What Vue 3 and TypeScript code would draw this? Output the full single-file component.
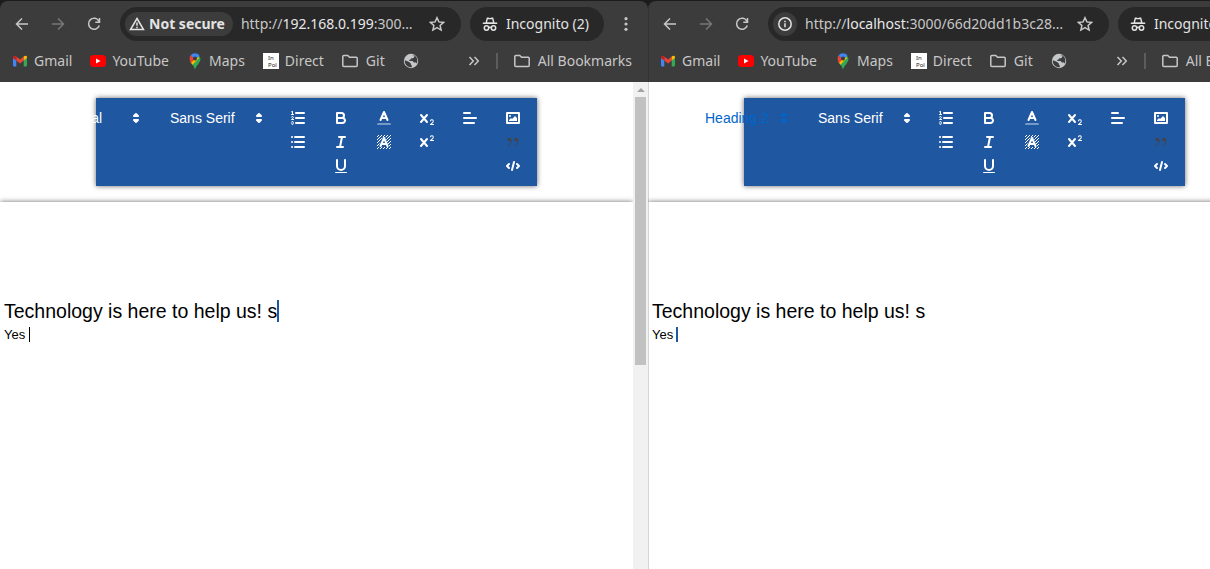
<script setup lang="ts">
interface BrowserWindow {
  id: string
  badge: 'warning' | 'info'
  scheme: string
  host: string
  rest: string
  heading: string
  headingActive: boolean
  scrollbar: boolean
  remoteCaret: 'title' | 'body'
}

const windows: BrowserWindow[] = [
  {
    id: 'network',
    badge: 'warning',
    scheme: 'http://',
    host: '192.168.0.199',
    rest: ':300…',
    heading: 'Normal',
    headingActive: false,
    scrollbar: true,
    remoteCaret: 'title',
  },
  {
    id: 'local',
    badge: 'info',
    scheme: 'http://',
    host: 'localhost',
    rest: ':3000/66d20dd1b3c28…',
    heading: 'Heading 2',
    headingActive: true,
    scrollbar: false,
    remoteCaret: 'body',
  },
]

const bookmarks = [
  { icon: 'gmail', label: 'Gmail' },
  { icon: 'youtube', label: 'YouTube' },
  { icon: 'maps', label: 'Maps' },
  { icon: 'direct', label: 'Direct' },
  { icon: 'folder', label: 'Git' },
  { icon: 'globe', label: '' },
]

const tools: string[][] = [
  ['ordered', 'bullet'],
  ['bold', 'italic', 'underline'],
  ['color', 'background'],
  ['sub', 'super'],
  ['align'],
  ['image', 'quote', 'code'],
]
</script>

<template>
  <svg class="sprite" aria-hidden="true">
    <defs>
      <pattern id="hatch" width="3" height="3" patternUnits="userSpaceOnUse">
        <path class="hatch" d="M-1 1L1 -1M0 3L3 0M2 4L4 2" />
      </pattern>
    </defs>

    <symbol id="i-gmail" viewBox="0 0 16 16">
      <path fill="#4285f4" d="M1 5v7.5a1 1 0 0 0 1 1h2.3V7.2z" />
      <path fill="#34a853" d="M15 5v7.500a1 1 0 0 1-1 1h-2.300V7.200z" />
      <path fill="#ea4335" d="M4.300 3.500L8 6.400l3.700-2.900v4L8 10.400 4.300 7.500z" />
      <path fill="#c5221f" d="M1 4.200C1 2.600 2.900 2.300 4.300 3.500v4L1 5z" />
      <path fill="#fbbc04" d="M15 4.200c0-1.600-1.900-1.900-3.300-.7v4L15 5z" />
    </symbol>
    <symbol id="i-youtube" viewBox="0 0 16 16">
      <rect x="0" y="2" width="16" height="12" rx="3.500" fill="#f00" />
      <path fill="#fff" d="M6 5.500v5L10.500 8z" />
    </symbol>
    <symbol id="i-maps" viewBox="0 0 16 16">
      <path fill="#34a853" d="M3.500 9C5 11.500 7 13 7.500 15.500c.1.500.9.500 1 0C9 13 13.500 9.500 13.500 5.700L12 2.500z" />
      <path fill="#fbbc04" d="M3.700 9.300L10 2l2 3-6.500 6.800z" />
      <path fill="#ea4335" d="M3.700 2.300L8 6 4 10C2 7 2.300 4 3.700 2.300z" />
      <path fill="#4285f4" d="M3.700 2.300C5.800-.4 10.400-.5 12.400 2.700L8 7z" />
      <circle cx="8" cy="5.500" r="2" fill="#3c3c3c" />
    </symbol>
    <symbol id="i-direct" viewBox="0 0 16 16">
      <rect width="16" height="16" fill="#fff" />
      <text x="5" y="7" class="favicon-text">In</text>
      <text x="5" y="14" class="favicon-text">Pol</text>
    </symbol>
    <symbol id="i-folder" viewBox="0 0 16 16">
      <path class="line" d="M.8 3.500q0-1 1-1h4l1.700 1.700h6.700q1 0 1 1v7.300q0 1-1 1H1.800q-1 0-1-1z" />
    </symbol>
    <symbol id="i-globe" viewBox="0 0 16 16">
      <circle cx="8" cy="8" r="7.200" fill="#c4c7c9" />
      <path fill="#3c3c3c" d="M1.900 7.200l4.200 1.700 1.700 1.500v1.200l1 1v1.700C4.800 14.600 1.300 11.300 1.900 7.200zM8 2.800l2.500-.8 1 1.500-1.300 1.800H8.500L7.200 6.700 5.800 7l.9 1.100h3l1.200 1.300h2.200l.6 1.300c1.500-3.500.4-7-3.200-8.900z" />
    </symbol>
    <symbol id="i-back" viewBox="0 0 16 16">
      <path class="line" d="M14 8H3M8 2.500L2.500 8 8 13.500" />
    </symbol>
    <symbol id="i-forward" viewBox="0 0 16 16">
      <path class="line" d="M2 8h11M8 2.500L13.500 8 8 13.500" />
    </symbol>
    <symbol id="i-reload" viewBox="0 0 16 16">
      <path class="line" d="M13.300 9.500A5.500 5.500 0 1 1 13 5.300M13.500 2v4.200H9.300" />
    </symbol>
    <symbol id="i-star" viewBox="0 0 16 16">
      <path class="line" d="M8 1.700l1.900 4.200 4.700.5-3.500 3.100 1 4.600L8 11.700l-4.100 2.400 1-4.600-3.500-3.100 4.700-.5z" />
    </symbol>
    <symbol id="i-warning" viewBox="0 0 16 16">
      <path class="line" d="M8 2.500L14.500 13.500H1.500zM8 6.500v3.200M8 10.800v1.400" />
    </symbol>
    <symbol id="i-info" viewBox="0 0 16 16">
      <circle class="line" cx="8" cy="8" r="6.200" />
      <path class="line" d="M8 7.200v4M8 4.700v1.500" />
    </symbol>
    <symbol id="i-incognito" viewBox="0 0 16 16">
      <path fill="currentColor" d="M4.800 1.500h1.400L8 2l1.800-.5h1.400L12.500 6.500H15.200V8H.8V6.500h2.700z" />
      <path fill="#282828" d="M5.800 3.300h4.400l.7 3H5.100z" />
      <circle class="line" cx="4.500" cy="12" r="2.200" />
      <circle class="line" cx="11.500" cy="12" r="2.200" />
      <path class="line" d="M6.700 11.500q1.300-.7 2.600 0" />
    </symbol>
    <symbol id="i-dots" viewBox="0 0 16 16">
      <g fill="currentColor">
        <circle cx="8" cy="2.700" r="1.600" /><circle cx="8" cy="8" r="1.600" /><circle cx="8" cy="13.300" r="1.600" />
      </g>
    </symbol>
    <symbol id="i-more" viewBox="0 0 16 16">
      <path class="line" d="M3.500 4L7.300 8l-3.800 4M8.500 4l3.800 4-3.800 4" />
    </symbol>

    <symbol id="t-ordered" viewBox="0 0 18 18">
      <path class="stroke" d="M7 4h8M7 9h8M7 14h8" />
      <path class="thin" d="M2.500 5.500h2" />
      <path class="fill" d="M3.500,6A0.500,0.500,0,0,1,3,5.500V3.085l-0.276.138A0.500,0.500,0,0,1,2.053,3c-0.124-.247-0.023-0.324.224-0.447l1-.5A0.500,0.500,0,0,1,4,2.500v3A0.500,0.500,0,0,1,3.500,6Z" />
      <path class="thin" d="M4.500,10.500h-2c0-.234,1.850-1.076,1.850-2.234A0.959,0.959,0,0,0,2.500,8.156" />
      <path class="thin" d="M2.500,14.846a0.959,0.959,0,0,0,1.850-.11A0.700,0.700,0,0,0,3.750,14a0.688,0.688,0,0,0,.6-0.736,0.959,0.959,0,0,0-1.850-.109" />
    </symbol>
    <symbol id="t-bullet" viewBox="0 0 18 18">
      <path class="stroke" d="M6 4h9M6 9h9M6 14h9M3 4h.01M3 9h.01M3 14h.01" />
    </symbol>
    <symbol id="t-bold" viewBox="0 0 18 18">
      <path class="stroke" d="M5,4H9.500A2.500,2.500,0,0,1,12,6.500v0A2.500,2.500,0,0,1,9.500,9H5V4Z" />
      <path class="stroke" d="M5,9h5.500A2.500,2.500,0,0,1,13,11.500v0A2.500,2.500,0,0,1,10.500,14H5V9Z" />
    </symbol>
    <symbol id="t-italic" viewBox="0 0 18 18">
      <path class="stroke" d="M7 4h6M5 14h6M8 14L10 4" />
    </symbol>
    <symbol id="t-underline" viewBox="0 0 18 18">
      <path class="stroke" d="M5,3V9a4.012,4.012,0,0,0,4,4H9a4.012,4.012,0,0,0,4-4V3" />
      <rect class="fill" x="3" y="15" width="12" height="1" rx="0.500" />
    </symbol>
    <symbol id="t-color" viewBox="0 0 18 18">
      <path class="stroke faded" d="M3 15h12" />
      <path class="stroke" d="M5.500 11L9 3l3.500 8M11.630 9H6.380" />
    </symbol>
    <symbol id="t-background" viewBox="0 0 18 18">
      <path fill="url(#hatch)" d="M2 2h14v14h-1.500L10.500 4h-3L3 14v2H2z" />
      <path fill="url(#hatch)" d="M3 14h12v2H3z" />
      <path class="stroke" d="M5.500 13L9 5l3.500 8M11.630 11H6.380" />
    </symbol>
    <symbol id="t-sub" viewBox="0 0 18 18">
      <path class="fill" d="M15.500,15H13.861a3.858,3.858,0,0,0,1.914-2.975,1.800,1.800,0,0,0-1.600-1.751A1.921,1.921,0,0,0,12.021,11.700a0.500,0.500,0,1,0,.957.291h0a0.914,0.914,0,0,1,1.053-.725,0.810,0.810,0,0,1,.744.762c0,1.076-1.170,1.870-1.940,2.431A1.456,1.456,0,0,0,12,15.500a0.500,0.500,0,0,0,.5.500h3A0.500,0.500,0,0,0,15.500,15Z" />
      <path class="stroke" d="M3 6l6 7M9 6l-6 7" />
    </symbol>
    <symbol id="t-super" viewBox="0 0 18 18">
      <path class="fill" d="M15.500,7H13.861a3.858,3.858,0,0,0,1.914-2.975,1.800,1.800,0,0,0-1.600-1.751A1.921,1.921,0,0,0,12.021,3.700a0.500,0.500,0,1,0,.957.291h0a0.914,0.914,0,0,1,1.053-.725,0.810,0.810,0,0,1,.744.762c0,1.076-1.170,1.870-1.940,2.431A1.456,1.456,0,0,0,12,7.500a0.500,0.500,0,0,0,.5.500h3A0.500,0.500,0,0,0,15.500,7Z" />
      <path class="stroke" d="M3 6l6 7M9 6l-6 7" />
    </symbol>
    <symbol id="t-align" viewBox="0 0 18 18">
      <path class="stroke" d="M3 9h12M3 14h10M3 4h6" />
    </symbol>
    <symbol id="t-image" viewBox="0 0 18 18">
      <rect class="stroke" x="3" y="4" width="12" height="10" />
      <circle class="fill" cx="6" cy="7" r="1" />
      <path class="fill" d="M5 12v-1l2-2 1 1 3-3 2 2v3z" />
    </symbol>
    <symbol id="t-quote" viewBox="0 0 18 18">
      <path class="fill" d="M4 5h3v3H4zM11 5h3v3h-3z" />
      <path class="thin" d="M4.500 5.500h2v2h-2zM11.500 5.500h2v2h-2z" />
      <path class="thin" d="M7,8c0,4.031-3,5-3,5M14,8c0,4.031-3,5-3,5" />
    </symbol>
    <symbol id="t-code" viewBox="0 0 18 18">
      <path class="stroke" d="M5 7L3 9l2 2M13 7l2 2-2 2M10 5L8 13" />
    </symbol>
    <symbol id="t-picker" viewBox="0 0 18 18">
      <path class="stroke solid" d="M7 11l2 2 2-2zM7 7l2-2 2 2z" />
    </symbol>
  </svg>

  <main class="desktop">
    <section v-for="w in windows" :key="w.id" class="window">
      <header class="chrome">
        <div class="nav">
          <button class="nav-button" aria-label="Back"><svg class="icon"><use href="#i-back" /></svg></button>
          <button class="nav-button" aria-label="Forward" disabled><svg class="icon"><use href="#i-forward" /></svg></button>
          <button class="nav-button" aria-label="Reload"><svg class="icon"><use href="#i-reload" /></svg></button>
          <div class="omnibox">
            <button v-if="w.badge === 'warning'" class="security">
              <svg class="icon"><use href="#i-warning" /></svg>Not secure
            </button>
            <button v-else class="security round" aria-label="Site information">
              <svg class="icon"><use href="#i-info" /></svg>
            </button>
            <span class="url">{{ w.scheme }}<b>{{ w.host }}</b>{{ w.rest }}</span>
            <button class="nav-button" aria-label="Bookmark this page"><svg class="icon"><use href="#i-star" /></svg></button>
          </div>
          <button class="incognito"><svg class="icon"><use href="#i-incognito" /></svg>Incognito (2)</button>
          <button class="nav-button" aria-label="Menu"><svg class="icon"><use href="#i-dots" /></svg></button>
        </div>
        <nav class="bookmarks" aria-label="Bookmarks">
          <a v-for="b in bookmarks" :key="b.icon" href="#" class="bookmark" :class="b.icon" :aria-label="b.label || 'Website'">
            <svg class="icon"><use :href="`#i-${b.icon}`" /></svg>
            <span v-if="b.label">{{ b.label }}</span>
          </a>
          <button class="more" aria-label="More bookmarks"><svg class="icon"><use href="#i-more" /></svg></button>
          <span class="divider"></span>
          <a href="#" class="bookmark folder"><svg class="icon"><use href="#i-folder" /></svg><span>All Bookmarks</span></a>
        </nav>
      </header>

      <div class="page">
        <div class="content">
          <div class="toolbar" role="toolbar">
            <div class="pickers">
              <label class="picker" :class="{ active: w.headingActive }">
                <select aria-label="Heading"><option>{{ w.heading }}</option></select>
                <svg class="glyph"><use href="#t-picker" /></svg>
              </label>
              <label class="picker font">
                <select aria-label="Font"><option>Sans Serif</option></select>
                <svg class="glyph"><use href="#t-picker" /></svg>
              </label>
            </div>
            <div class="tools">
              <div v-for="(group, i) in tools" :key="i" class="group">
                <button v-for="t in group" :key="t" class="tool" :class="t" :aria-label="t">
                  <svg class="glyph"><use :href="`#t-${t}`" /></svg>
                </button>
              </div>
            </div>
          </div>
          <article class="editor">
            <h2>Technology is here to help us! s<span v-if="w.remoteCaret === 'title'" class="caret remote"></span></h2>
            <p>Yes<span class="caret" :class="w.remoteCaret === 'body' ? 'remote' : 'own'"></span></p>
          </article>
        </div>
        <div class="scrollbar" :class="{ offscreen: !w.scrollbar }">
          <span class="arrow"></span>
          <span class="thumb"></span>
        </div>
      </div>
    </section>
  </main>
</template>

<style>
body {
  margin: 0;
  overflow: hidden;
}
</style>

<style scoped>
* {
  box-sizing: border-box;
}
button,
select {
  margin: 0;
  padding: 0;
  border: 0;
  background: none;
  color: inherit;
  font: inherit;
}
.sprite {
  position: absolute;
  width: 0;
  height: 0;
}
.line {
  fill: none;
  stroke: currentColor;
  stroke-width: 1.5;
}
.favicon-text {
  font: 6px "Noto Sans", sans-serif;
  fill: #222;
}
.stroke,
.thin {
  fill: none;
  stroke: currentColor;
  stroke-width: 2;
  stroke-linecap: round;
  stroke-linejoin: round;
}
.thin {
  stroke-width: 1;
}
.hatch {
  fill: none;
  stroke: #fff;
  stroke-width: 1;
}
.faded {
  opacity: 0.4;
}
.fill,
.solid {
  fill: currentColor;
}
.icon {
  flex: none;
  display: block;
  width: 16px;
  height: 16px;
}
.glyph {
  display: block;
  width: 18px;
  height: 18px;
}

.desktop {
  display: grid;
  grid-template-columns: repeat(2, minmax(648px, 1fr));
  min-height: 100vh;
  overflow: hidden;
  background: #1c1c1c;
}
.window {
  display: flex;
  flex-direction: column;
}
.chrome {
  height: 81px;
  margin-top: 1px;
  border-radius: 8px 8px 0 0;
  background: #3c3c3c;
  color: #c7c7c7;
  font: 14px/20px "Noto Sans", "Open Sans", sans-serif;
}
.window + .window .chrome {
  box-shadow: inset 1px 0 #333;
}
.nav {
  display: flex;
  align-items: center;
  gap: 8px;
  padding: 6px 8px 0;
}
.nav-button {
  display: grid;
  place-items: center;
  width: 28px;
  height: 28px;
}
.nav-button:disabled {
  color: #777;
}
.omnibox {
  flex: 1;
  display: flex;
  align-items: center;
  height: 34px;
  margin-left: 4px;
  padding: 0 10px 0 5px;
  border-radius: 17px;
  background: #282828;
}
.security {
  display: flex;
  align-items: center;
  gap: 4px;
  height: 24px;
  padding: 0 8px 0 4px;
  border-radius: 12px;
  background: #3c3c3c;
  color: #e3e3e3;
  font-weight: 700;
}
.round {
  padding: 0 4px;
}
.url {
  flex: 1;
  padding-left: 8px;
  white-space: nowrap;
}
.url b {
  color: #e8e8e8;
  font-weight: 400;
}
.incognito {
  display: flex;
  align-items: center;
  gap: 8px;
  height: 34px;
  margin-left: 1px;
  padding: 0 15px 0 12px;
  border-radius: 17px;
  background: #282828;
  color: #e3e3e3;
  white-space: nowrap;
}
.bookmarks {
  display: flex;
  align-items: center;
  height: 40px;
  padding: 0 16px 0 12px;
}
.bookmark {
  display: flex;
  align-items: center;
  gap: 6px;
  margin-right: 18px;
  color: inherit;
  text-decoration: none;
  white-space: nowrap;
}
.folder {
  gap: 8px;
}
.more {
  margin-left: auto;
}
.divider {
  width: 2px;
  height: 16px;
  margin: 0 16px 0 14px;
  background: #5c5c5c;
}
.divider + .bookmark {
  margin-right: 0;
}

.page {
  flex: 1;
  display: flex;
  background: #fff;
  font: 13px/18px "Liberation Sans", Arial, sans-serif;
}
.window + .window .page {
  box-shadow: inset 1px 0 #d4d4d4;
}
.content {
  flex: 1;
  display: flex;
  flex-direction: column;
  overflow: hidden;
}
.toolbar {
  display: flex;
  justify-content: flex-end;
  gap: 21px;
  margin: 16px 96px;
  padding: 11px 15px;
  background: #1f57a0;
  box-shadow: 0 0 5px rgba(0, 0, 0, 0.6);
  color: #fff;
}
.pickers,
.tools {
  display: flex;
  flex: none;
  gap: 25px;
}
.picker {
  display: flex;
  width: 88px;
  height: 18px;
  font-size: 14px;
}
.font {
  width: 98px;
}
.active {
  color: #06c;
}
.picker select {
  flex: 1;
  min-width: 0;
  appearance: none;
  line-height: 18px;
}
.group {
  display: flex;
  flex-direction: column;
  gap: 6px;
}
.tool {
  display: block;
  height: 18px;
}
.quote {
  color: #444;
}
.editor {
  flex: 1;
  padding: 95px 4px 0;
  box-shadow: 0 0 5px rgba(0, 0, 0, 0.6);
  color: #000;
}
.editor h2,
.editor p {
  margin: 0;
  font-weight: 400;
}
.editor h2 {
  margin-bottom: 1px;
  line-height: 28px;
}
.caret {
  display: inline-block;
  vertical-align: text-bottom;
  height: 15px;
  margin-left: 3px;
}
h2 .caret {
  height: 22px;
  margin-left: 0;
}
.remote {
  width: 2px;
  background: #1f57a0;
}
.own {
  width: 1px;
  margin-left: 4px;
  background: #000;
}
.scrollbar {
  display: flex;
  flex-direction: column;
  align-items: center;
  width: 15px;
  background: #f1f1f1;
}
.offscreen {
  visibility: hidden;
}
.arrow {
  margin: 6px 0 5px;
  border: 4px solid transparent;
  border-top: 0;
  border-bottom-color: #a3a3a3;
}
.thumb {
  width: 11px;
  height: 55%;
  background: #c1c1c1;
}
</style>
